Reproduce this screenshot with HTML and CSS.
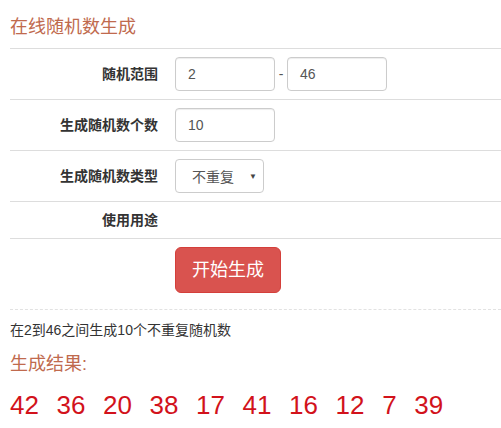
FILE: index.html
```html
<!DOCTYPE html>
<html lang="zh-CN">
<head>
<meta charset="utf-8">
<title>在线随机数生成</title>
<link rel="stylesheet" href="styles.css">
</head>
<body>
<div class="page">
  <h1 class="title">在线随机数生成</h1>
  <div class="form">
    <div class="row">
      <div class="label">随机范围</div>
      <div class="field">
        <div class="input">2</div>
        <span class="dash">-</span>
        <div class="input">46</div>
      </div>
    </div>
    <div class="row">
      <div class="label">生成随机数个数</div>
      <div class="field">
        <div class="input">10</div>
      </div>
    </div>
    <div class="row">
      <div class="label">生成随机数类型</div>
      <div class="field">
        <div class="select"><span class="select-text">不重复</span><span class="arrow">▼</span></div>
      </div>
    </div>
    <div class="row row-plain">
      <div class="label">使用用途</div>
      <div class="field"></div>
    </div>
    <div class="row row-last">
      <div class="label"></div>
      <div class="field">
        <button class="btn">开始生成</button>
      </div>
    </div>
  </div>
  <div class="result">
    <p class="desc">在2到46之间生成10个不重复随机数</p>
    <h2 class="result-title">生成结果:</h2>
    <div class="numbers">
      <span>42</span><span>36</span><span>20</span><span>38</span><span>17</span><span>41</span><span>16</span><span>12</span><span>7</span><span>39</span>
    </div>
  </div>
</div>
</body>
</html>
```

FILE: styles.css
```css
* { box-sizing: border-box; }
html, body { margin: 0; padding: 0; background: #fff; }
body {
  font-family: "Liberation Sans", "Noto Sans CJK SC", sans-serif;
  color: #333;
  font-size: 13px;
}
.page { padding-left: 10px; }
.title {
  margin: 17px 0 11px;
  font-size: 18px;
  line-height: 20px;
  font-weight: normal;
  color: #c06a4e;
}
.form { width: 491px; }
.row {
  display: flex;
  align-items: center;
  border-top: 1px solid #ddd;
  padding: 8px 0;
  min-height: 51px;
}
.row-plain { min-height: 37px; }
.row-last { min-height: 0; }
.label {
  width: 157px;
  flex: none;
  padding-right: 9px;
  text-align: right;
  font-weight: bold;
  font-size: 14px;
  line-height: 20px;
}
.field {
  display: flex;
  align-items: center;
  padding-left: 8px;
}
.input {
  width: 100px;
  height: 34px;
  border: 1px solid #ccc;
  border-radius: 4px;
  padding: 0 12px;
  font-size: 14px;
  line-height: 32px;
  color: #555;
  box-shadow: inset 0 1px 1px rgba(0,0,0,.075);
}
.dash {
  width: 12px;
  text-align: center;
  font-size: 14px;
  color: #555;
}
.select {
  width: 89px;
  height: 34px;
  border: 1px solid #ccc;
  border-radius: 4px;
  display: flex;
  align-items: center;
  justify-content: space-between;
  padding: 0 6px 0 16px;
  font-size: 14px;
  color: #555;
}
.arrow { font-size: 8px; color: #444; }
.btn {
  font-family: inherit;
  font-size: 18px;
  line-height: 24px;
  padding: 10px 16px;
  color: #fff;
  background: #d9534f;
  border: 1px solid #d43f3a;
  border-radius: 6px;
}
.result {
  border-top: 1px dashed #e2e2e2;
  margin-top: 8px;
  width: 491px;
}
.desc {
  margin: 10px 0 0;
  font-size: 14px;
  line-height: 20px;
}
.result-title {
  margin: 11px 0 0;
  font-size: 18px;
  line-height: 26px;
  font-weight: normal;
  color: #c06a4e;
}
.numbers {
  display: flex;
  gap: 17.6px;
  margin-top: 10px;
  font-size: 26px;
  line-height: 36px;
  color: #d2121b;
}
```
